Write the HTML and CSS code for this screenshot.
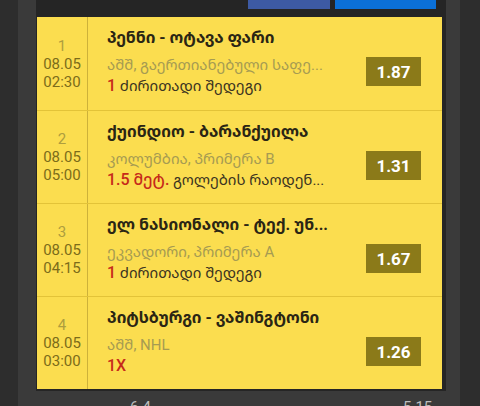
FILE: index.html
```html
<!DOCTYPE html>
<html lang="ka">
<head>
  <meta charset="UTF-8">
  <title>ბილეთი</title>
  <meta name="viewport" content="width=device-width, initial-scale=1">
  <link rel="stylesheet" href="styles.css">
</head>
<body>
  <div class="shell">
    <div class="panel">
      <div class="top-bar">
        <button class="btn btn-fb"></button>
        <button class="btn btn-share"></button>
      </div>

      <div class="card">
        <div class="row">
          <div class="when">
            <span class="num">1</span>
            <span>08.05</span>
            <span>02:30</span>
          </div>
          <div class="info">
            <div class="title">პენნი - ოტავა ფარი</div>
            <div class="league">აშშ, გაერთიანებული საფე...</div>
            <div class="pick"><b>1</b> ძირითადი შედეგი</div>
          </div>
          <div class="odds">1.87</div>
        </div>

        <div class="row">
          <div class="when">
            <span class="num">2</span>
            <span>08.05</span>
            <span>05:00</span>
          </div>
          <div class="info">
            <div class="title">ქუინდიო - ბარანქუილა</div>
            <div class="league">კოლუმბია, პრიმერა B</div>
            <div class="pick"><b>1.5 მეტ.</b> გოლების რაოდენ...</div>
          </div>
          <div class="odds">1.31</div>
        </div>

        <div class="row">
          <div class="when">
            <span class="num">3</span>
            <span>08.05</span>
            <span>04:15</span>
          </div>
          <div class="info">
            <div class="title">ელ ნასიონალი - ტექ. უნ...</div>
            <div class="league">ეკვადორი, პრიმერა A</div>
            <div class="pick"><b>1</b> ძირითადი შედეგი</div>
          </div>
          <div class="odds">1.67</div>
        </div>

        <div class="row">
          <div class="when">
            <span class="num">4</span>
            <span>08.05</span>
            <span>03:00</span>
          </div>
          <div class="info">
            <div class="title">პიტსბურგი - ვაშინგტონი</div>
            <div class="league">აშშ, NHL</div>
            <div class="pick"><b>1X</b></div>
          </div>
          <div class="odds">1.26</div>
        </div>
      </div>
    </div>

    <div class="totals">
      <span class="t-left">6.4</span>
      <span class="t-right">5.15</span>
    </div>
  </div>
</body>
</html>
```

FILE: styles.css
```css
body {
  margin: 0;
  background: #2d2d2d;
  font-family: Roboto, "Noto Sans Georgian", "DejaVu Sans", sans-serif;
  height: 406px;
  overflow: hidden;
}
.shell {
  margin-left: 18px;
  width: 442px;
  height: 406px;
  background: #3a3a3a;
}
.panel {
  margin-left: 18px;
  width: 410px;
  background: #252525;
  padding-bottom: 2px;
}
.top-bar {
  height: 17px;
  display: flex;
  justify-content: flex-end;
  align-items: flex-start;
  gap: 5px;
  padding-right: 10px;
}
.btn {
  border: none;
  height: 9px;
  padding: 0;
}
.btn-fb {
  width: 82px;
  background: #3d5aa3;
}
.btn-share {
  width: 101px;
  background: #0b70d8;
}
.card {
  margin: 0 4px 0 1px;
  background: #fbdd4f;
}
.row {
  display: grid;
  grid-template-columns: 51px 1fr 76px;
  height: 93px;
  box-sizing: border-box;
}
.row + .row {
  border-top: 1px solid #e3c338;
}
.when {
  border-right: 1px solid #cdb13a;
  display: flex;
  flex-direction: column;
  align-items: center;
  justify-content: center;
  font-size: 15px;
  line-height: 18px;
  color: #7c6c1a;
}
.when .num {
  color: #ae9d3e;
}
.info {
  padding: 10px 0 0 19px;
  min-width: 0;
  white-space: nowrap;
}
.title {
  font-size: 16px;
  font-weight: bold;
  color: #2a2514;
  line-height: 22px;
}
.league {
  font-size: 15px;
  color: #a69b52;
  line-height: 20px;
  margin-top: 6px;
}
.pick {
  font-size: 15px;
  color: #3b3421;
  line-height: 22px;
}
.pick b {
  color: #c62a1a;
  font-weight: 500;
  font-size: 16px;
}
.odds {
  align-self: start;
  margin-top: 40px;
  width: 55px;
  height: 29px;
  background: #8b7a19;
  color: #fff;
  font-size: 17px;
  font-weight: bold;
  display: flex;
  align-items: center;
  justify-content: center;
}
.totals {
  position: relative;
  height: 14px;
  color: #bdbdbd;
  font-size: 15px;
}
.t-left,
.t-right {
  position: absolute;
  top: 7px;
}
.t-left {
  left: 112px;
}
.t-right {
  left: 385px;
}
```
